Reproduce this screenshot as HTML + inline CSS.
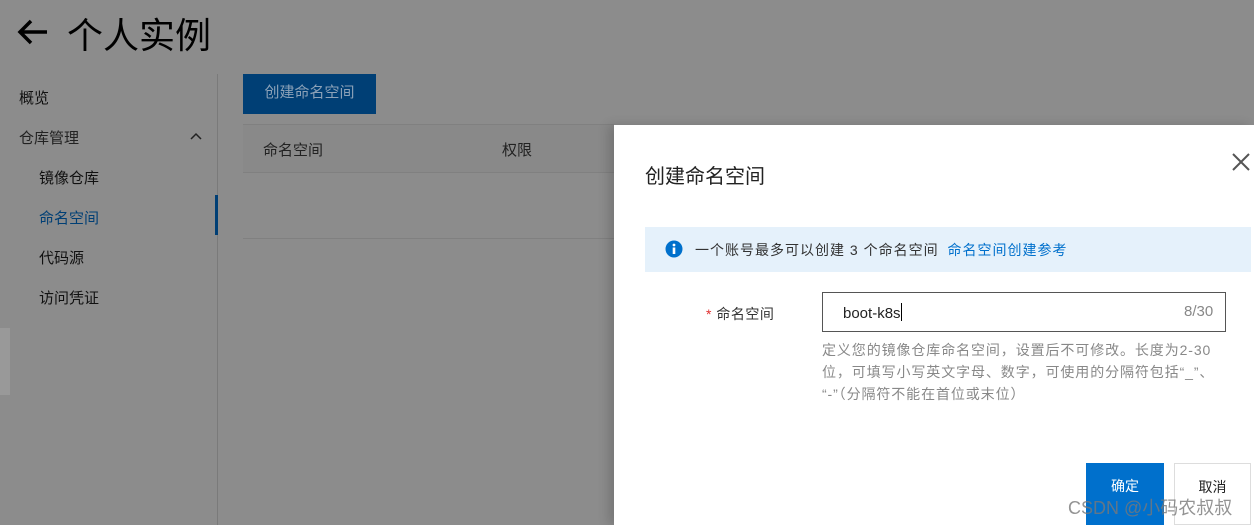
<!DOCTYPE html>
<html><head><meta charset="utf-8"><style>
*{margin:0;padding:0;box-sizing:border-box}
body{width:1254px;height:525px;background:#8c8c8c;font-family:"Liberation Sans","Noto Sans CJK SC",sans-serif;position:relative;overflow:hidden;color:#111}
.a{position:absolute;white-space:nowrap}
</style></head><body>
<svg class="a" style="left:16px;top:18px" width="34" height="30" viewBox="0 0 34 30"><path d="M31 14H4M15 3L4 14L15 25" stroke="#000" stroke-width="3.5" fill="none"/></svg>
<div class="a" style="left:67px;top:7px;font-size:36px;color:#000">个人实例</div>
<div class="a" style="left:217px;top:74px;width:1px;height:451px;background:#7a7a7a"></div>
<div class="a" style="left:215px;top:195px;width:3px;height:40px;background:#003f75"></div>
<div class="a" style="left:19px;top:87px;font-size:15px">概览</div>
<div class="a" style="left:19px;top:127px;font-size:15px;color:#222">仓库管理</div>
<svg class="a" style="left:190px;top:132px" width="12" height="8"><path d="M1 7L6 2L11 7" stroke="#222" stroke-width="1.5" fill="none"/></svg>
<div class="a" style="left:39px;top:167px;font-size:15px">镜像仓库</div>
<div class="a" style="left:39px;top:207px;font-size:15px;color:#003f75">命名空间</div>
<div class="a" style="left:39px;top:247px;font-size:15px">代码源</div>
<div class="a" style="left:39px;top:287px;font-size:15px">访问凭证</div>
<div class="a" style="left:0;top:328px;width:10px;height:67px;background:#999"></div>
<div class="a" style="left:243px;top:74px;width:133px;height:40px;background:#003f75;color:#8ca2b8;font-size:15px;line-height:38px;text-align:center">创建命名空间</div>
<div class="a" style="left:243px;top:124px;width:371px;height:49px;background:#898989;border-top:1px solid #808080;border-bottom:1px solid #808080"></div>
<div class="a" style="left:263px;top:139px;font-size:15px;color:#222">命名空间</div>
<div class="a" style="left:502px;top:139px;font-size:15px;color:#222">权限</div>
<div class="a" style="left:243px;top:238px;width:371px;height:1px;background:#808080"></div>
<div class="a" style="left:614px;top:125px;width:640px;height:400px;background:#fff;box-shadow:-6px 0 10px rgba(0,0,0,.15)"></div>
<div class="a" style="left:645px;top:160px;font-size:20px;color:#222">创建命名空间</div>
<svg class="a" style="left:1232px;top:153px" width="18" height="18"><path d="M1 1L17 17M17 1L1 17" stroke="#555" stroke-width="2"/></svg>
<div class="a" style="left:645px;top:227px;width:606px;height:45px;background:#e5f1fb"></div>
<svg class="a" style="left:665px;top:240px" width="18" height="18"><circle cx="9" cy="9" r="8.5" fill="#0070cc"/><rect x="7.7" y="7.5" width="2.6" height="6.5" fill="#fff"/><circle cx="9" cy="5" r="1.4" fill="#fff"/></svg>
<div class="a" style="left:695px;top:240px;font-size:14px;color:#333;letter-spacing:1px">一个账号最多可以创建 3 个命名空间 <span style="color:#0070cc;margin-left:4px">命名空间创建参考</span></div>
<div class="a" style="left:706px;top:304px;font-size:14px;color:#333;letter-spacing:0.5px"><span style="color:#e03030">*</span> 命名空间</div>
<div class="a" style="left:822px;top:292px;width:404px;height:40px;border:1px solid #555"></div>
<div class="a" style="left:843px;top:303px;font-size:15px;color:#222">boot-k8s<span style="display:inline-block;width:1px;height:18px;background:#000;vertical-align:-3px"></span></div>
<div class="a" style="left:1184px;top:303px;font-size:15px;color:#888">8/30</div>
<div class="a" style="left:822px;top:339px;font-size:14px;line-height:22px;color:#888;letter-spacing:0.9px">定义您的镜像仓库命名空间，设置后不可修改。长度为2-30<br>位，可填写小写英文字母、数字，可使用的分隔符包括“_”、<br>“-”（分隔符不能在首位或末位）</div>
<div class="a" style="left:1086px;top:463px;width:78px;height:62px;background:#0070cc;color:#fff;font-size:14px;padding-top:13px;text-align:center">确定</div>
<div class="a" style="left:1174px;top:463px;width:77px;height:62px;border:1px solid #ddd;font-size:14px;padding-top:13px;text-align:center;color:#222">取消</div>
<div class="a" style="left:1068px;top:494px;font-size:18px;color:rgba(120,120,120,.8)">CSDN @小码农叔叔</div>
</body></html>
